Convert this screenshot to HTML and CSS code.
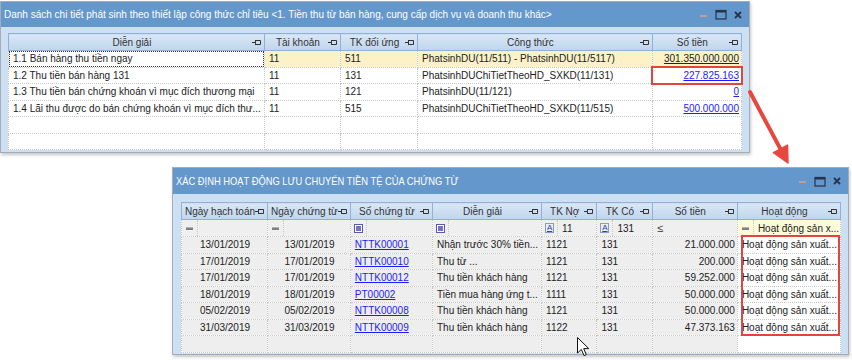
FILE: index.html
```html
<!DOCTYPE html>
<html lang="vi">
<head>
    <meta charset="UTF-8">
    <meta name="viewport" content="width=device-width, initial-scale=1.0">
    <title>Chi tiết phát sinh</title>
    <link rel="stylesheet" href="styles.css">
</head>
<body>
<div class="desk">

    <!-- Top window: danh sach chi tiet -->
    <div class="window win-top">
        <div class="title-bar">
            <span class="title">Danh sách chi tiết phát sinh theo thiết lập công thức chỉ tiêu &lt;1. Tiền thu từ bán hàng, cung cấp dịch vụ và doanh thu khác&gt;</span>
            <div class="controls">
                <svg class="ctl" width="10" height="10" viewBox="0 0 10 10"><path d="M1 6h7" stroke="#dca084" stroke-width="1.5"/></svg>
                <svg class="ctl" width="12" height="11" viewBox="0 0 12 11"><rect x="1" y="1.5" width="10" height="8.5" fill="none" stroke="#25344a" stroke-width="1.2"/><path d="M1 2.5h10" stroke="#25344a" stroke-width="2"/></svg>
                <svg class="ctl" width="10" height="10" viewBox="0 0 10 10"><path d="M2 2l6 6M8 2l-6 6" stroke="#25344a" stroke-width="1.8"/></svg>
            </div>
        </div>
        <div class="frame">
            <table class="grid grid-top">
                <colgroup>
                    <col style="width:240px">
                    <col style="width:80px">
                    <col style="width:80px">
                    <col style="width:243px">
                    <col style="width:91px">
                </colgroup>
                <thead>
                    <tr>
                        <th><div class="th-in"><span>Diễn giải</span><svg class="pin" viewBox="0 0 9 7"><path d="M0 3.5h3M3.5 1v5M4 1.5h4.5v4H4" fill="none" stroke="#333"/></svg></div></th>
                        <th><div class="th-in"><span>Tài khoản</span><svg class="pin" viewBox="0 0 9 7"><path d="M0 3.5h3M3.5 1v5M4 1.5h4.5v4H4" fill="none" stroke="#333"/></svg></div></th>
                        <th><div class="th-in"><span>TK đối ứng</span><svg class="pin" viewBox="0 0 9 7"><path d="M0 3.5h3M3.5 1v5M4 1.5h4.5v4H4" fill="none" stroke="#333"/></svg></div></th>
                        <th><div class="th-in"><span>Công thức</span><svg class="pin" viewBox="0 0 9 7"><path d="M0 3.5h3M3.5 1v5M4 1.5h4.5v4H4" fill="none" stroke="#333"/></svg></div></th>
                        <th><div class="th-in"><span>Số tiền</span><svg class="pin" viewBox="0 0 9 7"><path d="M0 3.5h3M3.5 1v5M4 1.5h4.5v4H4" fill="none" stroke="#333"/></svg></div></th>
                    </tr>
                </thead>
                <tbody>
                    <tr class="selected">
                        <td class="focus">1.1 Bán hàng thu tiền ngay</td>
                        <td>11</td>
                        <td>511</td>
                        <td>PhatsinhDU(11/511) - PhatsinhDU(11/5117)</td>
                        <td class="num"><span class="plain-link">301.350.000.000</span></td>
                    </tr>
                    <tr>
                        <td>1.2 Thu tiền bán hàng 131</td>
                        <td>11</td>
                        <td>131</td>
                        <td>PhatsinhDUChiTietTheoHD_SXKD(11/131)</td>
                        <td class="num marked"><a href="#">227.825.163</a></td>
                    </tr>
                    <tr>
                        <td>1.3 Thu tiền bán chứng khoán vì mục đích thương mại</td>
                        <td>11</td>
                        <td>121</td>
                        <td>PhatsinhDU(11/121)</td>
                        <td class="num"><a href="#">0</a></td>
                    </tr>
                    <tr>
                        <td>1.4 Lãi thu được do bán chứng khoán vì mục đích thư...</td>
                        <td>11</td>
                        <td>515</td>
                        <td>PhatsinhDUChiTietTheoHD_SXKD(11/515)</td>
                        <td class="num"><a href="#">500.000.000</a></td>
                    </tr>
                    <tr><td></td><td></td><td></td><td></td><td></td></tr>
                    <tr><td></td><td></td><td></td><td></td><td></td></tr>
                </tbody>
            </table>
        </div>
    </div>

    <!-- Arrow from the marked amount down to the second window -->
    <svg class="arrow" width="60" height="85" viewBox="0 0 60 85">
        <path d="M10 7L40.4 63.9" stroke="#e8473e" stroke-width="4" stroke-linecap="round"/>
        <path d="M48 78L33.4 67.7L47.5 60.1Z" fill="#e8473e" stroke="#e8473e" stroke-width="1.5" stroke-linejoin="round"/>
    </svg>

    <!-- Bottom window: xac dinh hoat dong -->
    <div class="window win-bottom">
        <div class="title-bar title-bar-b">
            <span class="title title-b">XÁC ĐỊNH HOẠT ĐỘNG LƯU CHUYỂN TIỀN TỆ CỦA CHỨNG TỪ</span>
            <div class="controls">
                <svg class="ctl" width="10" height="10" viewBox="0 0 10 10"><path d="M1 6h7" stroke="#dca084" stroke-width="1.5"/></svg>
                <svg class="ctl" width="12" height="11" viewBox="0 0 12 11"><rect x="1" y="1.5" width="10" height="8.5" fill="none" stroke="#25344a" stroke-width="1.2"/><path d="M1 2.5h10" stroke="#25344a" stroke-width="2"/></svg>
                <svg class="ctl" width="10" height="10" viewBox="0 0 10 10"><path d="M2 2l6 6M8 2l-6 6" stroke="#25344a" stroke-width="1.8"/></svg>
            </div>
        </div>
        <div class="frame frame-b">
            <table class="grid grid-bottom">
                <colgroup>
                    <col style="width:83px">
                    <col style="width:81px">
                    <col style="width:85px">
                    <col style="width:102px">
                    <col style="width:58px">
                    <col style="width:58px">
                    <col style="width:93px">
                    <col style="width:99px">
                </colgroup>
                <thead>
                    <tr>
                        <th><div class="th-in"><span>Ngày hạch toán</span><svg class="pin" viewBox="0 0 9 7"><path d="M0 3.5h3M3.5 1v5M4 1.5h4.5v4H4" fill="none" stroke="#333"/></svg></div></th>
                        <th><div class="th-in"><span>Ngày chứng từ</span><svg class="pin" viewBox="0 0 9 7"><path d="M0 3.5h3M3.5 1v5M4 1.5h4.5v4H4" fill="none" stroke="#333"/></svg></div></th>
                        <th><div class="th-in"><span>Số chứng từ</span><svg class="pin" viewBox="0 0 9 7"><path d="M0 3.5h3M3.5 1v5M4 1.5h4.5v4H4" fill="none" stroke="#333"/></svg></div></th>
                        <th><div class="th-in"><span>Diễn giải</span><svg class="pin" viewBox="0 0 9 7"><path d="M0 3.5h3M3.5 1v5M4 1.5h4.5v4H4" fill="none" stroke="#333"/></svg></div></th>
                        <th><div class="th-in"><span>TK Nợ</span><svg class="pin" viewBox="0 0 9 7"><path d="M0 3.5h3M3.5 1v5M4 1.5h4.5v4H4" fill="none" stroke="#333"/></svg></div></th>
                        <th><div class="th-in"><span>TK Có</span><svg class="pin" viewBox="0 0 9 7"><path d="M0 3.5h3M3.5 1v5M4 1.5h4.5v4H4" fill="none" stroke="#333"/></svg></div></th>
                        <th><div class="th-in"><span>Số tiền</span><svg class="pin" viewBox="0 0 9 7"><path d="M0 3.5h3M3.5 1v5M4 1.5h4.5v4H4" fill="none" stroke="#333"/></svg></div></th>
                        <th><div class="th-in"><span>Hoạt động</span><svg class="pin" viewBox="0 0 9 7"><path d="M0 3.5h3M3.5 1v5M4 1.5h4.5v4H4" fill="none" stroke="#333"/></svg></div></th>
                    </tr>
                </thead>
                <tbody>
                    <tr class="filter">
                        <td><div class="fcell"><span class="op"><i class="ic-eq"></i></span><span class="fval"></span></div></td>
                        <td><div class="fcell"><span class="op"><i class="ic-eq"></i></span><span class="fval"></span></div></td>
                        <td><div class="fcell"><span class="op"><i class="ic-box"></i></span><span class="fval"></span></div></td>
                        <td><div class="fcell"><span class="op"><i class="ic-box"></i></span><span class="fval"></span></div></td>
                        <td><div class="fcell"><span class="op"><i class="ic-a">A</i></span><span class="fval">11</span></div></td>
                        <td><div class="fcell"><span class="op"><i class="ic-a">A</i></span><span class="fval">131</span></div></td>
                        <td><div class="fcell"><span class="op op-le">≤</span><span class="fval"></span></div></td>
                        <td class="filter-act"><div class="fcell"><span class="op"><i class="ic-eq"></i></span><span class="fval">Hoạt động sản x...</span></div></td>
                    </tr>
                    <tr>
                        <td class="ctr">13/01/2019</td><td class="ctr">13/01/2019</td><td><a href="#">NTTK00001</a></td>
                        <td>Nhận trước 30% tiền...</td><td>1121</td><td>131</td><td class="num">21.000.000</td><td class="act">Hoạt động sản xuất...</td>
                    </tr>
                    <tr>
                        <td class="ctr">17/01/2019</td><td class="ctr">17/01/2019</td><td><a href="#">NTTK00010</a></td>
                        <td>Thu từ ...</td><td>1121</td><td>131</td><td class="num">200.000</td><td class="act">Hoạt động sản xuất...</td>
                    </tr>
                    <tr>
                        <td class="ctr">17/01/2019</td><td class="ctr">17/01/2019</td><td><a href="#">NTTK00012</a></td>
                        <td>Thu tiền khách hàng</td><td>1121</td><td>131</td><td class="num">59.252.000</td><td class="act">Hoạt động sản xuất...</td>
                    </tr>
                    <tr>
                        <td class="ctr">18/01/2019</td><td class="ctr">18/01/2019</td><td><a href="#">PT00002</a></td>
                        <td>Tiền mua hàng ứng t...</td><td>1111</td><td>131</td><td class="num">50.000.000</td><td class="act">Hoạt động sản xuất...</td>
                    </tr>
                    <tr>
                        <td class="ctr">05/02/2019</td><td class="ctr">05/02/2019</td><td><a href="#">NTTK00008</a></td>
                        <td>Thu tiền khách hàng</td><td>1121</td><td>131</td><td class="num">50.000.000</td><td class="act">Hoạt động sản xuất...</td>
                    </tr>
                    <tr>
                        <td class="ctr">31/03/2019</td><td class="ctr">31/03/2019</td><td><a href="#">NTTK00009</a></td>
                        <td>Thu tiền khách hàng</td><td>1122</td><td>131</td><td class="num">47.373.163</td><td class="act">Hoạt động sản xuất...</td>
                    </tr>
                    <tr class="blank">
                        <td></td><td></td><td></td><td></td><td></td><td></td><td></td><td class="act"></td>
                    </tr>
                </tbody>
            </table>
            <div class="mark-col"></div>
        </div>
    </div>

    <!-- Mouse pointer -->
    <svg class="cursor" width="13" height="20" viewBox="0 0 13 20">
        <path d="M0.5 0.5V16L4.3 12.4L7 18.6L9.3 17.6L6.7 11.6H11.8Z" fill="#fff" stroke="#111" stroke-width="1" stroke-linejoin="round"/>
    </svg>

</div>
</body>
</html>
```

FILE: styles.css
```css
body {
    margin: 0;
    background: #fff;
    font-family: "Liberation Sans", Arial, sans-serif;
    font-size: 10px;
    color: #222;
}

.desk {
    position: relative;
    width: 852px;
    height: 360px;
    overflow: hidden;
}

/* windows sit on a free canvas */
.window {
    position: absolute;
    border: 1px solid #a3acb8;
    background: #cddff2;
    box-shadow: 1px 2px 3px rgba(0, 0, 0, 0.22);
    overflow: hidden;
}

.win-top {
    left: 0;
    top: 1px;
    width: 748px;
    height: 150px;
}

.win-bottom {
    left: 172px;
    top: 167px;
    width: 675px;
    height: 186px;
}

.title-bar {
    display: flex;
    align-items: center;
    justify-content: space-between;
    height: 25px;
    padding: 0 6px 0 3px;
    background: #6497cb;
    color: #fff;
}

.title-bar-b {
    height: 26px;
    padding-left: 3px;
}

.title {
    font-size: 10px;
    white-space: nowrap;
}

.title-b {
    display: inline-block;
    font-size: 11px;
    transform: scaleX(0.85);
    transform-origin: left center;
}

.controls {
    display: flex;
    align-items: center;
    gap: 6px;
}

.ctl {
    display: block;
}

.frame {
    padding: 6px 7px 0 7px;
}

.frame-b {
    position: relative;
    padding: 8px 7px 0 8px;
}

/* grids */
.grid {
    border-collapse: collapse;
    table-layout: fixed;
    background: #fff;
}

.grid th {
    height: 16px;
    padding: 0 3px 0 3px;
    background: linear-gradient(#d9e7f6, #bfd5ed);
    border: 1px solid #92b1d5;
    font-weight: normal;
    color: #333;
}

.th-in {
    display: flex;
    align-items: center;
}

.th-in span {
    flex: 1;
    text-align: center;
    white-space: nowrap;
}

.pin {
    width: 9px;
    height: 7px;
    flex: none;
}

.grid td {
    height: 15.5px;
    padding: 0 3px 0 4px;
    border: 1px dotted #c8c8c8;
    white-space: nowrap;
    overflow: hidden;
    text-overflow: clip;
}

.grid .num {
    text-align: right;
    padding-right: 2px;
}

.grid a {
    color: #1d1dff;
    text-decoration: underline;
}

.plain-link {
    text-decoration: underline;
}

.selected td {
    background: #fdf1c8;
}

.selected td.focus {
    background: #fff;
    outline: 1px dotted #333;
    outline-offset: -1px;
}

.marked {
    outline: 2px solid #e5443b;
    outline-offset: -1px;
}

.grid-bottom tbody td {
    background: #eeeeee;
}

.grid-bottom td.act {
    background: #fff;
}

.grid-bottom td.ctr {
    text-align: center;
}

.grid-bottom .filter td {
    background: #efefef;
}

.grid-bottom .filter td.filter-act {
    background: #fdfbd9;
}

.grid-bottom .filter td {
    padding: 0;
}

.fcell {
    display: flex;
    align-items: center;
    height: 16px;
}

.op {
    display: flex;
    align-items: center;
    justify-content: center;
    width: 15px;
    height: 100%;
    border-right: 1px dotted #c8c8c8;
    flex: none;
}

.op-le {
    border-right: none;
    font-size: 11px;
    color: #333;
}

.fval {
    padding-left: 4px;
    white-space: nowrap;
}

.ic-eq {
    display: block;
    width: 7px;
    height: 2px;
    background: #7f7f7f;
    border-top: 1px solid #b3b3b3;
}

.ic-box {
    display: block;
    position: relative;
    width: 7px;
    height: 7px;
    border: 1px solid #5a5aa6;
    background: #fff;
}

.ic-box::after {
    content: "";
    position: absolute;
    left: 1px;
    top: 1px;
    width: 5px;
    height: 5px;
    background: #7272d6;
}

.ic-a {
    display: block;
    width: 7px;
    height: 8px;
    border: 1px solid #8b9acb;
    background: #e9edf8;
    color: #3048a0;
    font-style: normal;
    font-size: 8px;
    line-height: 8px;
    text-align: center;
    text-decoration: underline;
}

.mark-col {
    position: absolute;
    left: 568px;
    top: 41px;
    width: 95px;
    height: 97px;
    border: 2px solid #e5443b;
}

.arrow {
    position: absolute;
    left: 740px;
    top: 85px;
}

.cursor {
    position: absolute;
    left: 577px;
    top: 337px;
}
```
